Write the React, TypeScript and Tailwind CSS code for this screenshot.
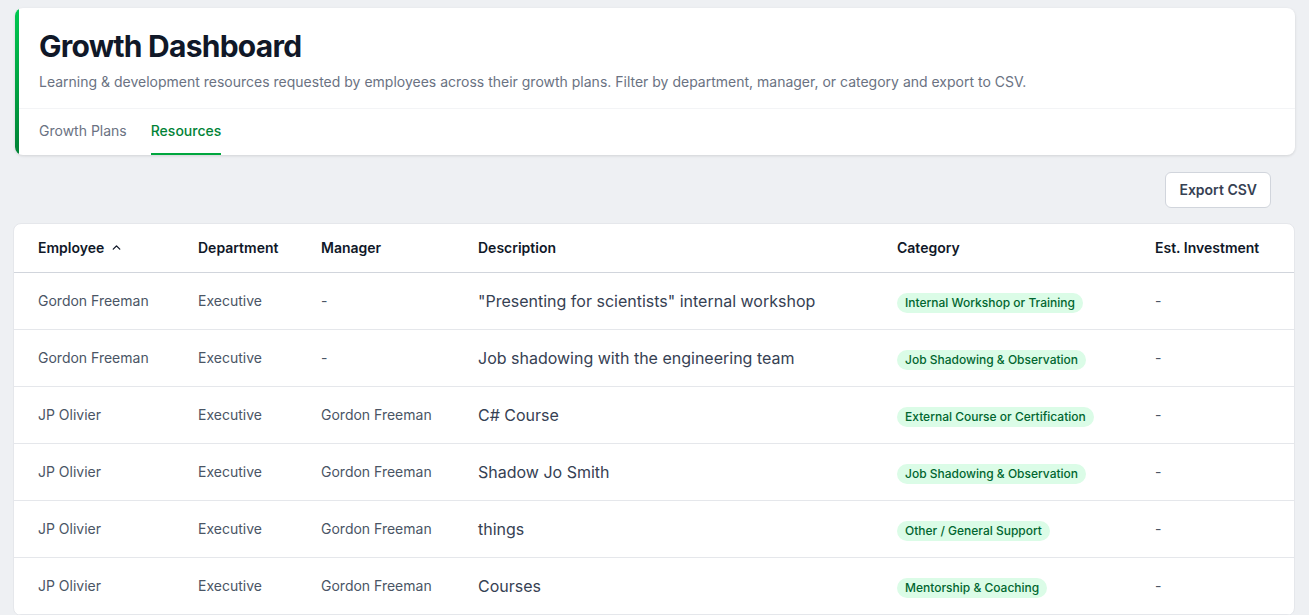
import { ChevronUp } from 'lucide-react';

interface ResourceRow {
  employee: string;
  department: string;
  manager: string;
  description: string;
  category: string;
  investment: string;
}

const rows: ResourceRow[] = [
  {
    employee: 'Gordon Freeman',
    department: 'Executive',
    manager: '-',
    description: '"Presenting for scientists" internal workshop',
    category: 'Internal Workshop or Training',
    investment: '-',
  },
  {
    employee: 'Gordon Freeman',
    department: 'Executive',
    manager: '-',
    description: 'Job shadowing with the engineering team',
    category: 'Job Shadowing & Observation',
    investment: '-',
  },
  {
    employee: 'JP Olivier',
    department: 'Executive',
    manager: 'Gordon Freeman',
    description: 'C# Course',
    category: 'External Course or Certification',
    investment: '-',
  },
  {
    employee: 'JP Olivier',
    department: 'Executive',
    manager: 'Gordon Freeman',
    description: 'Shadow Jo Smith',
    category: 'Job Shadowing & Observation',
    investment: '-',
  },
  {
    employee: 'JP Olivier',
    department: 'Executive',
    manager: 'Gordon Freeman',
    description: 'things',
    category: 'Other / General Support',
    investment: '-',
  },
  {
    employee: 'JP Olivier',
    department: 'Executive',
    manager: 'Gordon Freeman',
    description: 'Courses',
    category: 'Mentorship & Coaching',
    investment: '-',
  },
];

export default function App() {
  return (
    <div
      className="min-h-screen bg-[#eef0f3] p-[14px] pt-2"
      style={{ fontFamily: 'Inter, "Noto Sans", sans-serif' }}
    >
      {/* header card */}
      <div className="ml-px flex overflow-hidden rounded-lg bg-white shadow-[0_1px_3px_rgba(0,0,0,0.12)]">
        <div className="w-1 shrink-0 bg-gradient-to-b from-green-500 to-green-700" />
        <div className="flex-1">
          <div className="px-5 pt-5 pb-4">
            <h1 className="text-3xl font-bold tracking-tight text-gray-900">Growth Dashboard</h1>
            <p className="mt-2 text-sm text-gray-500">
              Learning &amp; development resources requested by employees across their growth plans. Filter by
              department, manager, or category and export to CSV.
            </p>
          </div>
          <div className="flex gap-6 border-t border-gray-100 px-5">
            <button className="border-b-2 border-transparent py-3 text-sm text-gray-500">Growth Plans</button>
            <button className="border-b-2 border-green-600 py-3 text-sm font-medium text-green-700">
              Resources
            </button>
          </div>
        </div>
      </div>

      <div className="flex justify-end pt-[17px] pr-6 pb-[15px]">
        <button className="h-9 rounded-md border border-gray-300 bg-white px-[13px] text-sm font-semibold text-gray-700">
          Export CSV
        </button>
      </div>

      {/* resources table */}
      <div className="-ml-px overflow-hidden rounded-lg border border-gray-200 bg-white">
        <table className="w-full table-fixed text-left">
          <thead>
            <tr className="border-b border-gray-300">
              <th className="h-12 w-[160px] pl-6 text-sm font-semibold text-gray-900">
                <span className="inline-flex items-center gap-1.5">
                  Employee <ChevronUp size={13} strokeWidth={2.5} />
                </span>
              </th>
              <th className="w-[123px] pl-6 text-sm font-semibold text-gray-900">Department</th>
              <th className="w-[157px] pl-6 text-sm font-semibold text-gray-900">Manager</th>
              <th className="w-[419px] pl-6 text-sm font-semibold text-gray-900">Description</th>
              <th className="w-[258px] pl-6 text-sm font-semibold text-gray-900">Category</th>
              <th className="pl-6 text-sm font-semibold text-gray-900">Est. Investment</th>
            </tr>
          </thead>
          <tbody>
            {rows.map((row, i) => (
              <tr key={i} className="border-b border-gray-200">
                <td className="h-[57px] pl-6 text-sm text-gray-600">{row.employee}</td>
                <td className="pl-6 text-sm text-gray-600">{row.department}</td>
                <td className="pl-6 text-sm text-gray-600">{row.manager}</td>
                <td className="pl-6 text-base text-gray-700">{row.description}</td>
                <td className="pl-6">
                  <span className="inline-block rounded-full bg-green-100 px-2 py-0.5 text-xs font-medium text-green-800">
                    {row.category}
                  </span>
                </td>
                <td className="pl-6 text-sm text-gray-600">{row.investment}</td>
              </tr>
            ))}
          </tbody>
        </table>
      </div>
    </div>
  );
}
